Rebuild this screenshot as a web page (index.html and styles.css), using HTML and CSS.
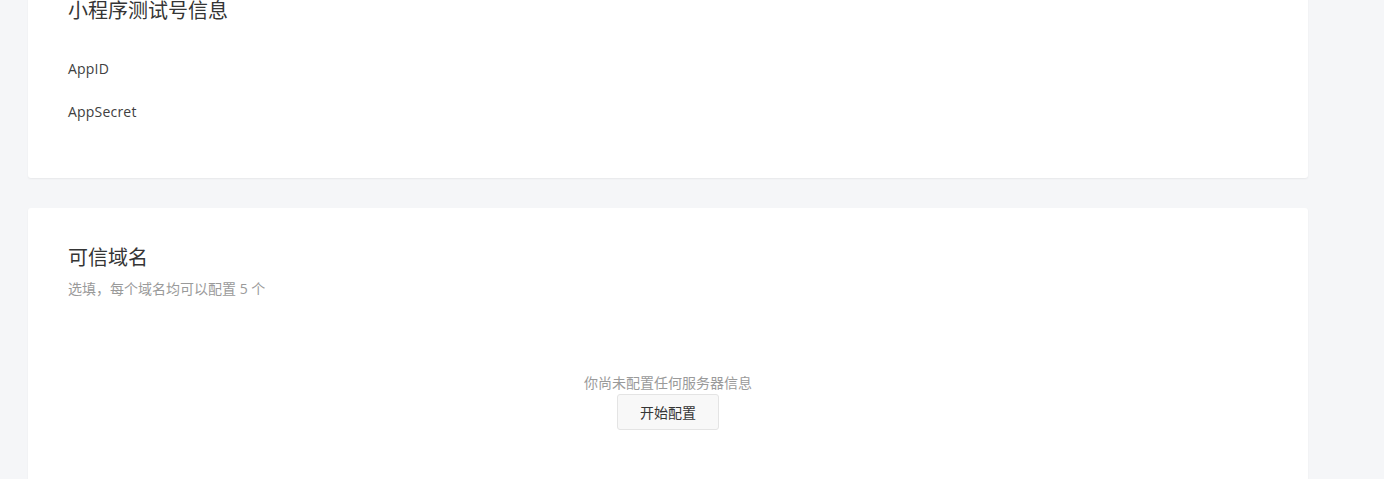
FILE: index.html
```html
<!DOCTYPE html>
<html lang="zh-CN">
<head>
  <meta charset="UTF-8" />
  <meta name="viewport" content="width=device-width, initial-scale=1.0"/>
  <title>开发设置</title>
  <link rel="stylesheet" href="styles.css">
</head>
<body>

  <div class="page">
    <div class="panel panel-info">
      <h2 class="panel-title">小程序测试号信息</h2>
      <ul class="info-list">
        <li class="info-item">AppID</li>
        <li class="info-item">AppSecret</li>
      </ul>
    </div>

    <div class="panel panel-domain">
      <h2 class="panel-title">可信域名</h2>
      <p class="panel-desc">选填，每个域名均可以配置 5 个</p>

      <div class="empty">
        <p class="empty-text">你尚未配置任何服务器信息</p>
        <button class="btn">开始配置</button>
      </div>
    </div>
  </div>

</body>
</html>
```

FILE: styles.css
```css
html,
body {
  margin: 0;
  height: 100%;
  overflow: hidden;
}

body {
  background-color: #f5f6f8;
  font-family: "Segoe UI", "Open Sans", "Noto Sans CJK SC", sans-serif;
  color: #353535;
}

.page {
  width: 1280px;
  margin: -39px 0 0 28px;
  display: flex;
  flex-direction: column;
  gap: 30px;
}

.panel {
  background: #fff;
  border-radius: 3px;
  box-shadow: 0 1px 2px rgba(0, 0, 0, 0.06);
  padding: 40px;
}

.panel-info {
  padding-bottom: 56px;
}

.panel-domain {
  min-height: 400px;
}

.panel-title {
  margin: 0;
  font-size: 20px;
  font-weight: normal;
  line-height: 20px;
  color: #353535;
}

.info-list {
  list-style: none;
  margin: 38px 0 0;
  padding: 0;
  display: flex;
  flex-direction: column;
  gap: 23px;
}

.info-item {
  font-size: 14px;
  line-height: 20px;
  letter-spacing: 0.2px;
  color: #404040;
}

.panel-desc {
  margin: 11px 0 0;
  font-size: 14px;
  line-height: 20px;
  color: #9a9a9a;
}

.empty {
  margin-top: 75px;
  display: flex;
  flex-direction: column;
  align-items: center;
}

.empty-text {
  margin: 0;
  font-size: 14px;
  line-height: 18px;
  color: #9a9a9a;
}

.btn {
  margin-top: 2px;
  width: 102px;
  height: 36px;
  background: #f8f8f8;
  border: 1px solid #e4e4e4;
  border-radius: 3px;
  font-family: inherit;
  font-size: 14px;
  color: #353535;
  cursor: pointer;
}
```
